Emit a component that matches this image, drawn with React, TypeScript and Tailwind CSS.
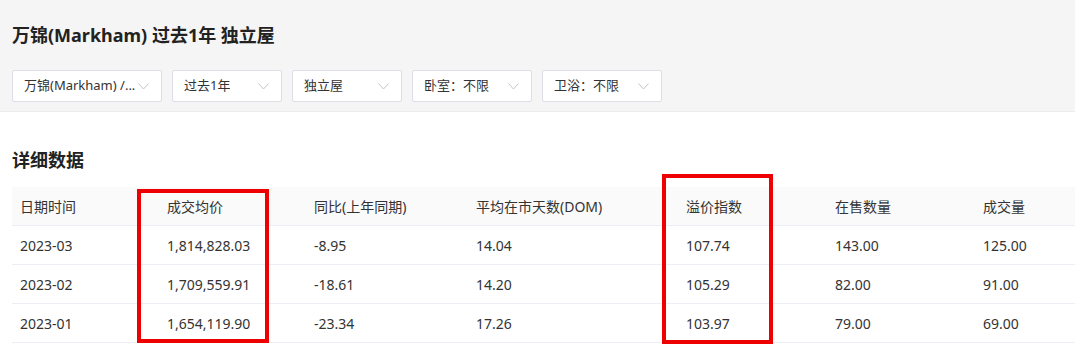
import React from "react";

const font = { fontFamily: '"Noto Sans", "Noto Sans CJK SC", sans-serif' };

function Chevron() {
  return (
    <svg width="11" height="7" viewBox="0 0 11 7" fill="none">
      <path d="M0.5 0.5 L5.5 6 L10.5 0.5" stroke="#c0c4cc" strokeWidth="1" />
    </svg>
  );
}

function Select({ label, w }: { label: string; w: string }) {
  return (
    <div className={`${w} h-8 bg-white border border-[#dcdfe6] rounded-[2px] flex items-center justify-between pl-[11px] pr-[12px] text-[13px] text-[#333]`}>
      <span className="truncate">{label}</span>
      <Chevron />
    </div>
  );
}

const cols = [
  { h: "日期时间", w: "w-[147px]" },
  { h: "成交均价", w: "w-[147px]" },
  { h: "同比(上年同期)", w: "w-[162px]" },
  { h: "平均在市天数(DOM)", w: "w-[210px]" },
  { h: "溢价指数", w: "w-[149px]" },
  { h: "在售数量", w: "w-[148px]" },
  { h: "成交量", w: "flex-1" },
];

const rows = [
  ["2023-03", "1,814,828.03", "-8.95", "14.04", "107.74", "143.00", "125.00"],
  ["2023-02", "1,709,559.91", "-18.61", "14.20", "105.29", "82.00", "91.00"],
  ["2023-01", "1,654,119.90", "-23.34", "17.26", "103.97", "79.00", "69.00"],
];

export default function App() {
  return (
    <div className="relative w-[1075px] h-[350px] bg-white overflow-hidden" style={font}>
      <div className="bg-[#f5f5f5] border-b border-[#ececec] px-3 pt-[23px] pb-[9px]">
        <div className="h-6 leading-6 text-[18px] font-bold text-[#222]">万锦(Markham) 过去1年 独立屋</div>
        <div className="mt-[23px] flex gap-[10px]">
          <Select label="万锦(Markham) /..." w="w-[150px]" />
          <Select label="过去1年" w="w-[110px]" />
          <Select label="独立屋" w="w-[110px]" />
          <Select label="卧室：不限" w="w-[120px]" />
          <Select label="卫浴：不限" w="w-[120px]" />
        </div>
      </div>
      <div className="pl-3 pt-[36px]">
        <div className="h-6 leading-6 text-[18px] font-bold text-[#222]">详细数据</div>
        <div className="mt-[15px] text-[14px] text-[#333]">
          <div className="flex h-[39px] bg-[#fafafa] border-b border-[#ebeef5] items-center">
            {cols.map((c) => (
              <div key={c.h} className={`${c.w} pl-2`}>{c.h}</div>
            ))}
          </div>
          {rows.map((r) => (
            <div key={r[0]} className="flex h-[39px] border-b border-[#ebeef5] items-center">
              {r.map((v, i) => (
                <div key={i} className={`${cols[i].w} pl-2`}>{v}</div>
              ))}
            </div>
          ))}
        </div>
      </div>
      <div className="absolute left-[137px] top-[189px] w-[132px] h-[154px] border-4 border-[#ee0000]" />
      <div className="absolute left-[662px] top-[174px] w-[111px] h-[170px] border-4 border-[#ee0000]" />
    </div>
  );
}
